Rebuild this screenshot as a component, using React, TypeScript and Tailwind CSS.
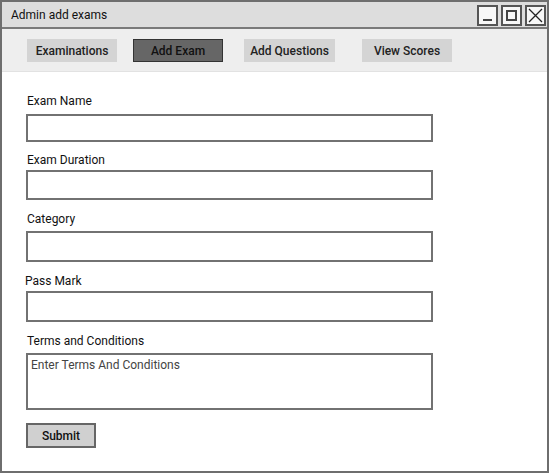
import React from "react";

const font = { fontFamily: "Roboto, 'Liberation Sans', sans-serif" };

export default function App() {
  return (
    <div className="w-[551px] h-[474px] bg-white" style={font}>
      <div className="w-[549px] h-[473px] border-2 border-[#6e6e6e] flex flex-col bg-white">
        {/* Title bar */}
        <div className="h-[27px] bg-[#dddddd] border-b-2 border-[#7a7a7a] flex items-center justify-between">
          <span className="ml-[9px] text-[12px] text-[#111]">Admin add exams</span>
          <div className="flex gap-[3px] mr-[1px] mt-[1px]">
            <div className="w-[21px] h-[21px] border-2 border-[#555] bg-[#f7f7f7] flex items-end justify-center pb-[3px]">
              <div className="w-[9px] h-[2px] bg-[#444]" />
            </div>
            <div className="w-[21px] h-[21px] border-2 border-[#555] bg-[#f7f7f7] flex items-center justify-center">
              <div className="w-[11px] h-[11px] border-2 border-[#444]" />
            </div>
            <div className="w-[21px] h-[21px] border-2 border-[#555] bg-[#f7f7f7] flex items-center justify-center">
              <svg width="15" height="15" viewBox="0 0 15 15">
                <path d="M1 1 L14 14 M14 1 L1 14" stroke="#222" strokeWidth="1.3" />
              </svg>
            </div>
          </div>
        </div>
        {/* Nav */}
        <div className="h-[43px] bg-[#eeeeee] border-b border-[#e2e2e2] flex items-start pt-[10px]">
          <button className="ml-[25px] w-[90px] h-[23px] bg-[#d4d4d4] text-[12px] font-medium text-[#222]">Examinations</button>
          <button className="ml-[16px] w-[90px] h-[23px] bg-[#666666] border border-[#333] text-[12px] font-medium text-[#111]">Add Exam</button>
          <button className="ml-[21px] w-[91px] h-[23px] bg-[#d4d4d4] text-[12px] font-medium text-[#222]">Add Questions</button>
          <button className="ml-[27px] w-[90px] h-[23px] bg-[#d4d4d4] text-[12px] font-medium text-[#222]">View Scores</button>
        </div>
        {/* Form */}
        <div className="flex flex-col pl-[24px] text-[12px] text-[#111]">
          <label className="mt-[21px] ml-[1px] h-[16px] leading-[16px]">Exam Name</label>
          <div className="mt-[5px] w-[407px] h-[28px] border-2 border-[#727272] bg-white" />
          <label className="mt-[10px] ml-[1px] h-[16px] leading-[16px]">Exam Duration</label>
          <div className="mt-[2px] w-[407px] h-[30px] border-2 border-[#727272] bg-white" />
          <label className="mt-[11px] ml-[1px] h-[16px] leading-[16px]">Category</label>
          <div className="mt-[4px] w-[407px] h-[31px] border-2 border-[#727272] bg-white" />
          <label className="mt-[11px] ml-[-1px] h-[16px] leading-[16px]">Pass Mark</label>
          <div className="mt-[2px] w-[407px] h-[31px] border-2 border-[#727272] bg-white" />
          <label className="mt-[11px] ml-[1px] h-[16px] leading-[16px]">Terms and Conditions</label>
          <div className="mt-[4px] w-[407px] h-[57px] border-2 border-[#727272] bg-white px-[3px] pt-[2px] text-[#444] leading-[16px]">
            Enter Terms And Conditions
          </div>
          <button className="mt-[13px] w-[70px] h-[25px] bg-[#d0d0d0] border-2 border-[#666] text-[12px] font-medium text-[#111]">Submit</button>
        </div>
      </div>
    </div>
  );
}
